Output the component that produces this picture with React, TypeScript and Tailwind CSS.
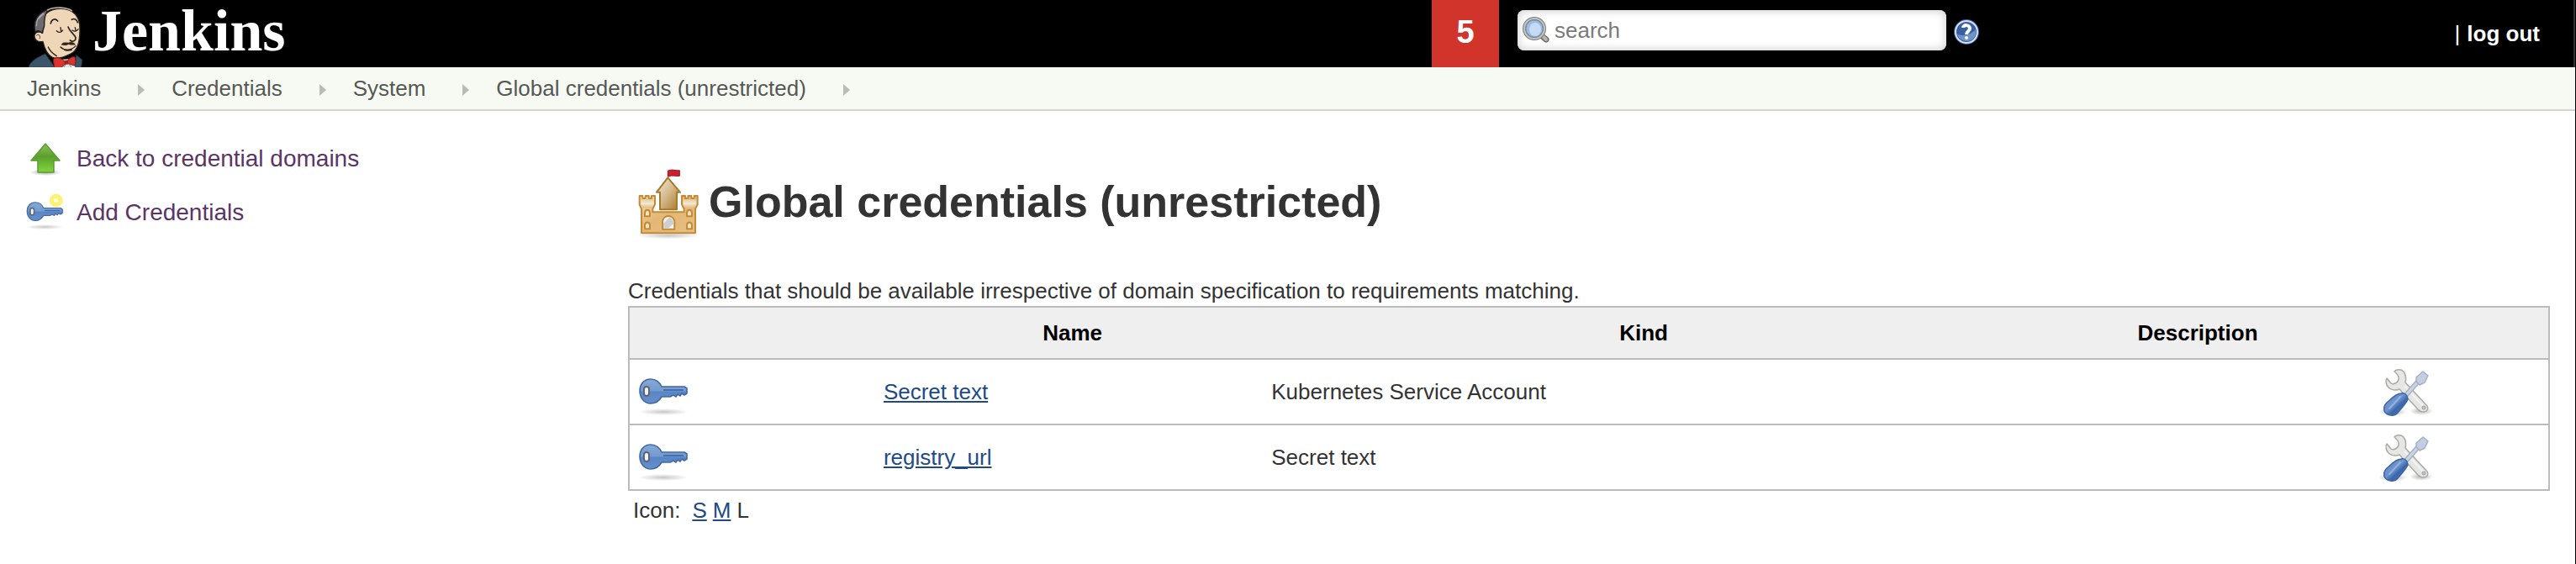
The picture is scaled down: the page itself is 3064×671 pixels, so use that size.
import type { ReactNode } from "react";

function ButlerLogo() {
  return (
    <svg viewBox="0 0 270 240" className="h-20 w-[90px] shrink-0" aria-hidden="true">
      <g strokeLinecap="round" strokeLinejoin="round">
        <path d="M42 240C46 220 72 204 102 192L136 240Z" fill="#3a5468" stroke="#1d2a33" strokeWidth="3" />
        <path d="M204 240L212 196L234 214L230 240Z" fill="#3a5468" stroke="#1d2a33" strokeWidth="3" />
        <path d="M150 240L160 212L200 210L208 240Z" fill="#f4f4f4" />
        <path
          d="M98 58C112 30 168 22 198 42C220 56 226 82 225 108C225 145 216 182 192 192C172 202 148 214 126 204C108 194 98 170 93 148C74 152 61 140 63 126C66 112 84 112 92 118Z"
          fill="#efd6b7"
          stroke="#2a2422"
          strokeWidth="4"
        />
        <path
          d="M66 114C56 78 74 46 112 33C100 52 97 72 98 94L90 118C82 108 72 110 66 114Z"
          fill="#6c6a6d"
          stroke="#231f20"
          strokeWidth="4"
        />
        <path d="M70 92C70 72 80 56 94 48M80 66C84 58 90 54 96 50" fill="none" stroke="#a5a3a6" strokeWidth="4" />
        <path d="M110 36C135 22 178 26 196 38" fill="none" stroke="#b9b3ac" strokeWidth="5" />
        <path d="M71 126C78 120 85 126 82 137" fill="none" stroke="#4a3b33" strokeWidth="3" />
        <path d="M121 84C123 70 136 63 146 75M196 70C206 64 214 70 217 80" fill="none" stroke="#2a2422" strokeWidth="5" />
        <path d="M142 110C150 118 160 116 164 108M156 98L158 110M198 108C206 114 214 112 219 104M208 98L210 108" fill="none" stroke="#2a2422" strokeWidth="4" />
        <path d="M183 96C188 112 204 120 210 134C211 148 198 150 190 144" fill="none" stroke="#2a2422" strokeWidth="5" />
        <path d="M158 160C164 148 174 152 184 152C194 148 204 150 210 160C198 162 190 160 184 158C176 164 166 162 158 160Z" fill="#33291f" />
        <path d="M156 168C170 182 196 180 210 164M170 178C180 182 190 180 196 178" fill="none" stroke="#2a2422" strokeWidth="4" />
        <path d="M112 168C118 184 130 192 142 200" fill="none" stroke="#2a2422" strokeWidth="4" />
        <path
          d="M130 212C140 200 156 206 168 217L182 216C188 206 200 200 208 204C211 216 210 226 207 234C198 232 190 230 184 226L170 230C164 240 152 246 134 246C134 234 130 222 130 212Z"
          fill="#d8352f"
          stroke="#701713"
          strokeWidth="3"
        />
        <path d="M168 217L182 216L184 226L170 230Z" fill="#a8211d" />
        <path d="M168 240L174 230L188 230L194 240Z" fill="#e9eef0" stroke="#555" strokeWidth="2" />
      </g>
    </svg>
  );
}

function MagnifierIcon() {
  return (
    <svg viewBox="0 0 32 32" className="h-8 w-8 shrink-0" aria-hidden="true">
      <path d="M22 22L28 27" stroke="#70706a" strokeWidth="7" strokeLinecap="round" />
      <path d="M23 22L28 27" stroke="#b6b6b1" strokeWidth="4" strokeLinecap="round" />
      <circle cx="14" cy="14" r="12" fill="#a9c6ec" stroke="#7d7d78" strokeWidth="4" />
      <circle cx="14" cy="14" r="12" fill="none" stroke="#c4c4c0" strokeWidth="2" />
      <circle cx="14" cy="14" r="10" fill="#9dbce6" stroke="#7396c8" strokeWidth="1" />
      <ellipse cx="15" cy="15" rx="7" ry="8" fill="#c6daf4" />
    </svg>
  );
}

function HelpIcon() {
  return (
    <svg viewBox="0 0 32 32" className="h-8 w-8" aria-hidden="true">
      <circle cx="16" cy="16" r="15" fill="#3b5f9c" />
      <circle cx="16" cy="16" r="13" fill="#39609f" stroke="#d5e0f1" strokeWidth="2" />
      <path d="M5 18C10 22 21 20 27 13A11 11 0 0 1 16 27A11 11 0 0 1 5 18Z" fill="#6f93c9" />
      <path d="M12 11C12 7 20 7 20 12C20 15 16 15 16 19" fill="none" stroke="#fff" strokeWidth="4" />
      <circle cx="16" cy="23" r="2" fill="#fff" />
    </svg>
  );
}

function UpIcon() {
  return (
    <svg viewBox="0 0 48 48" className="h-12 w-12 shrink-0" aria-hidden="true">
      <defs>
        <linearGradient id="up-fill" x1="0" y1="0" x2="0" y2="1">
          <stop offset="0" stopColor="#8cc063" />
          <stop offset="0.45" stopColor="#5b9f2b" />
          <stop offset="1" stopColor="#82d63c" />
        </linearGradient>
        <radialGradient id="up-shadow">
          <stop offset="0" stopColor="#000" stopOpacity="0.35" />
          <stop offset="1" stopColor="#000" stopOpacity="0" />
        </radialGradient>
      </defs>
      <ellipse cx="24" cy="41" rx="19" ry="4" fill="url(#up-shadow)" />
      <path d="M24 7L41 27H34V41H15V27H7Z" fill="url(#up-fill)" stroke="#5d9c33" strokeWidth="1.5" strokeLinejoin="round" />
    </svg>
  );
}

function KeyShape() {
  return (
    <>
      <defs>
        <linearGradient id="key-fill" x1="0" y1="0" x2="0" y2="1">
          <stop offset="0" stopColor="#86a9d6" />
          <stop offset="0.48" stopColor="#739bd0" />
          <stop offset="0.52" stopColor="#5a85c4" />
          <stop offset="1" stopColor="#6690cc" />
        </linearGradient>
        <radialGradient id="key-shadow">
          <stop offset="0" stopColor="#000" stopOpacity="0.22" />
          <stop offset="1" stopColor="#000" stopOpacity="0" />
        </radialGradient>
      </defs>
      <ellipse cx="34" cy="56" rx="30" ry="4" fill="url(#key-shadow)" />
      <path
        d="M32 26H59L62 28V34L59 36L56 34L54 37L51 35L49 38L46 36L42 38H32C29 43 25 46 19 46C11 46 6 39 6 31C6 23 11 17 19 17C25 17 30 21 32 26Z"
        fill="url(#key-fill)"
        stroke="#4069a6"
        strokeWidth="1.6"
        strokeLinejoin="round"
      />
      <path d="M34 30H58" stroke="#456fae" strokeWidth="2" />
      <rect x="11" y="26" width="6" height="11" rx="3" fill="#f5f3ec" stroke="#5b6674" strokeWidth="2" />
    </>
  );
}

function KeyIcon() {
  return (
    <svg viewBox="0 0 64 64" className="block h-16 w-16" aria-hidden="true">
      <KeyShape />
    </svg>
  );
}

function NewKeyIcon() {
  return (
    <svg viewBox="3 0 64 64" className="h-12 w-12 shrink-0" aria-hidden="true">
      <KeyShape />
      <circle cx="52" cy="14" r="7" fill="#fffde0" stroke="#fdf273" strokeWidth="7" />
    </svg>
  );
}

function ToolsIcon() {
  return (
    <svg viewBox="0 0 64 64" className="block h-16 w-16" aria-hidden="true">
      <defs>
        <linearGradient id="handle-fill" x1="0" y1="0" x2="1" y2="1">
          <stop offset="0" stopColor="#5c86c4" />
          <stop offset="0.45" stopColor="#7095cf" />
          <stop offset="0.6" stopColor="#3c68ab" />
          <stop offset="1" stopColor="#4f7cbd" />
        </linearGradient>
        <radialGradient id="tools-shadow">
          <stop offset="0" stopColor="#000" stopOpacity="0.3" />
          <stop offset="1" stopColor="#000" stopOpacity="0" />
        </radialGradient>
      </defs>
      <ellipse cx="16" cy="56" rx="17" ry="5" fill="url(#tools-shadow)" />
      <ellipse cx="50" cy="55" rx="14" ry="5" fill="url(#tools-shadow)" />
      <path
        d="M18 8C20 5 26 5 29 8C32 12 32 18 31 21L57 49C59 52 57 56 53 56C50 56 48 55 46 53L24 29C20 31 14 30 11 27C8 24 7 19 9 16L14 22C17 24 24 21 23 15C23 12 20 10 18 8Z"
        fill="#e6e6e4"
        stroke="#aaaaa6"
        strokeWidth="1.5"
        strokeLinejoin="round"
      />
      <path d="M30 25L53 50" stroke="#f2f2f0" strokeWidth="2" />
      <circle cx="53" cy="51" r="2" fill="#c9c9c6" stroke="#9a9a96" />
      <path d="M31 37L46 20" stroke="#a6b1c1" strokeWidth="6" />
      <path d="M31 37L46 20" stroke="#cbd4e1" strokeWidth="3" />
      <path d="M44 15L52 8L58 13L54 21L48 24L44 20Z" fill="#c3cfe0" stroke="#a3b1c7" strokeWidth="1.5" strokeLinejoin="round" />
      <path
        d="M26 34C30 33 34 36 34 41C32 46 27 51 22 57C18 62 9 61 6 55C5 51 6 48 9 45C14 41 18 35 26 34Z"
        fill="url(#handle-fill)"
        stroke="#3b65a6"
        strokeWidth="1.5"
      />
      <path d="M12 52L25 38" stroke="#92b1de" strokeWidth="2" strokeLinecap="round" />
    </svg>
  );
}

function CastleIcon() {
  return (
    <svg viewBox="-9 -6 288 288" className="h-24 w-24 shrink-0" aria-hidden="true">
      <defs>
        <linearGradient id="wall-fill" x1="0" y1="0" x2="1" y2="1">
          <stop offset="0" stopColor="#efd9b0" />
          <stop offset="0.45" stopColor="#e3b877" />
          <stop offset="1" stopColor="#e6be7f" />
        </linearGradient>
        <linearGradient id="keep-fill" x1="0" y1="0" x2="1" y2="1">
          <stop offset="0" stopColor="#f2ede0" />
          <stop offset="0.5" stopColor="#d2b98a" />
          <stop offset="1" stopColor="#a8741f" />
        </linearGradient>
        <linearGradient id="turret-fill" x1="0" y1="0" x2="0" y2="1">
          <stop offset="0" stopColor="#e8cf9c" />
          <stop offset="0.5" stopColor="#f0e8d8" />
          <stop offset="1" stopColor="#e3b877" />
        </linearGradient>
        <radialGradient id="castle-shadow">
          <stop offset="0" stopColor="#000" stopOpacity="0.22" />
          <stop offset="1" stopColor="#000" stopOpacity="0" />
        </radialGradient>
      </defs>
      <ellipse cx="135" cy="271" rx="115" ry="12" fill="url(#castle-shadow)" />
      <path d="M134 62V38" stroke="#8a2a22" strokeWidth="4" />
      <path d="M133 40C148 32 160 40 175 38V58C162 60 150 54 133 60Z" fill="#c9232d" stroke="#a31820" strokeWidth="3" />
      <path d="M133 64L177 116H165V178H105V116H93Z" fill="url(#keep-fill)" stroke="#a77a2e" strokeWidth="6" strokeLinejoin="round" />
      <g stroke="#c48a35" strokeWidth="6" strokeLinejoin="round">
        <path
          d="M32 129H43V138H53V129H65V138H75V129H87V160L79 176V187H191V176L183 160V129H195V138H205V129H217V138H227V129H239V160L231 176V262H39V176L32 160Z"
          fill="url(#wall-fill)"
        />
        <path d="M36 142H83V158L76 172H43L36 158Z" fill="url(#turret-fill)" stroke="none" />
        <path d="M187 142H235V158L228 172H194L187 158Z" fill="url(#turret-fill)" stroke="none" />
        <path d="M114 248V222C116 194 154 194 157 222V248Z" fill="#f7f7f7" />
        <path d="M117 245V228L140 205L154 220V228L134 245Z" fill="#cfcfcf" stroke="none" />
        <path d="M51 202V190C52 176 68 176 69 190V202Z" fill="#f4e4c4" />
        <path d="M51 247V234C52 220 68 220 69 234V247Z" fill="#f4e4c4" />
        <path d="M201 202V190C202 176 218 176 219 190V202Z" fill="#f4e4c4" />
        <path d="M201 247V234C202 220 218 220 219 234V247Z" fill="#f4e4c4" />
      </g>
    </svg>
  );
}

const crumbs = ["Jenkins", "Credentials", "System", "Global credentials (unrestricted)"];

const credentials = [
  { name: "Secret text", kind: "Kubernetes Service Account" },
  { name: "registry_url", kind: "Secret text" },
];

function Header() {
  return (
    <header className="flex h-20 items-start border-r-2 border-[#333333] bg-black pl-5 text-white">
      <a href="#home" className="flex h-20 items-start" aria-label="Jenkins">
        <ButlerLogo />
        <span className="font-['Liberation_Serif','Times_New_Roman',serif] text-[70px] leading-[74px] font-bold">
          Jenkins
        </span>
      </a>
      <div className="ml-auto flex h-20 items-start">
        <a href="#monitors" className="flex h-20 w-20 items-center justify-center bg-[#d0342b] pb-1 text-[38px] font-bold">
          5
        </a>
        <form className="mt-3 ml-[22px] flex items-center gap-2" role="search">
          <div className="flex h-12 w-[510px] items-center gap-1.5 rounded-lg bg-white pl-1.5 shadow-[inset_0_0_10px_2px_#d6d6d6]">
            <MagnifierIcon />
            <input
              type="text"
              aria-label="search"
              placeholder="search"
              className="w-full bg-transparent text-[26px] leading-8 text-[#333333] outline-none placeholder:text-[#7a7a7a]"
            />
          </div>
          <a href="#help" aria-label="Help" className="mt-1">
            <HelpIcon />
          </a>
        </form>
      </div>
      <div className="flex h-20 w-[706px] items-center justify-end gap-2 pr-10 text-[26px]">
        <span aria-hidden="true">|</span>
        <a href="#logout" className="font-bold">
          log out
        </a>
      </div>
    </header>
  );
}

function Breadcrumbs() {
  return (
    <nav aria-label="Breadcrumb" className="border-b-2 border-[#d3d6cf] bg-[#f6faf2]">
      <ol className="flex h-[50px] items-center pl-8 text-[26px] leading-8 text-[#565855]">
        {crumbs.map((crumb) => (
          <li key={crumb} className="flex items-center">
            <a href="#crumb">{crumb}</a>
            <svg viewBox="0 0 8 14" className="mt-1 mr-8 ml-11 h-3.5 w-2" aria-hidden="true">
              <path d="M0 0L8 7L0 14Z" fill="#b9bbb7" />
            </svg>
          </li>
        ))}
      </ol>
    </nav>
  );
}

function Task({ icon, children }: { icon: ReactNode; children: ReactNode }) {
  return (
    <a href="#task" className="flex h-16 items-center gap-[13px] text-[28px] leading-9 text-[#5c3566]">
      {icon}
      <span className="pt-0.5">{children}</span>
    </a>
  );
}

export default function App() {
  return (
    <div className="flex min-h-screen flex-col border-r border-black bg-white font-['Liberation_Sans',Arial,sans-serif] text-[26px] leading-8 text-[#333333]">
      <Header />
      <Breadcrumbs />
      <div className="flex flex-1">
        <aside className="w-[747px] shrink-0 pt-6 pl-[30px]">
          <Task icon={<UpIcon />}>Back to credential domains</Task>
          <Task icon={<NewKeyIcon />}>Add Credentials</Task>
        </aside>
        <main className="min-w-0 flex-1 pt-14 pr-[30px]">
          <h1 className="flex h-24 items-start text-[52px] leading-[104px] font-bold">
            <CastleIcon />
            <span>Global credentials (unrestricted)</span>
          </h1>
          <p className="mt-[46px] pb-0.5">
            Credentials that should be available irrespective of domain specification to requirements matching.
          </p>
          <table className="w-full table-fixed border-collapse border-2 border-[#bbbbbb]">
            <colgroup>
              <col className="w-[13%]" />
              <col className="w-[20.2%]" />
              <col className="w-[39.3%]" />
              <col className="w-[18.4%]" />
              <col className="w-[9.1%]" />
            </colgroup>
            <thead className="bg-[#efefef] text-black">
              <tr className="h-[62px]">
                <td />
                <th scope="col">Name</th>
                <th scope="col">Kind</th>
                <th scope="col">Description</th>
                <td />
              </tr>
            </thead>
            <tbody>
              {credentials.map(({ name, kind }) => (
                <tr key={name} className="h-[78px] border-t-2 border-[#bbbbbb]">
                  <td className="px-1.5">
                    <KeyIcon />
                  </td>
                  <td className="px-1.5">
                    <a href="#credential" className="text-[#204a87] underline">
                      {name}
                    </a>
                  </td>
                  <td className="px-1.5">{kind}</td>
                  <td className="px-1.5" />
                  <td className="px-1.5">
                    <a href="#update" aria-label={`Update ${name}`} className="inline-block align-middle">
                      <ToolsIcon />
                    </a>
                  </td>
                </tr>
              ))}
            </tbody>
          </table>
          <div className="flex gap-[7px] pt-[7px] pl-1.5">
            <span className="mr-[7px]">Icon:</span>
            <a href="#small" className="text-[#204a87] underline">
              S
            </a>
            <a href="#medium" className="text-[#204a87] underline">
              M
            </a>
            <span>L</span>
          </div>
        </main>
      </div>
    </div>
  );
}
